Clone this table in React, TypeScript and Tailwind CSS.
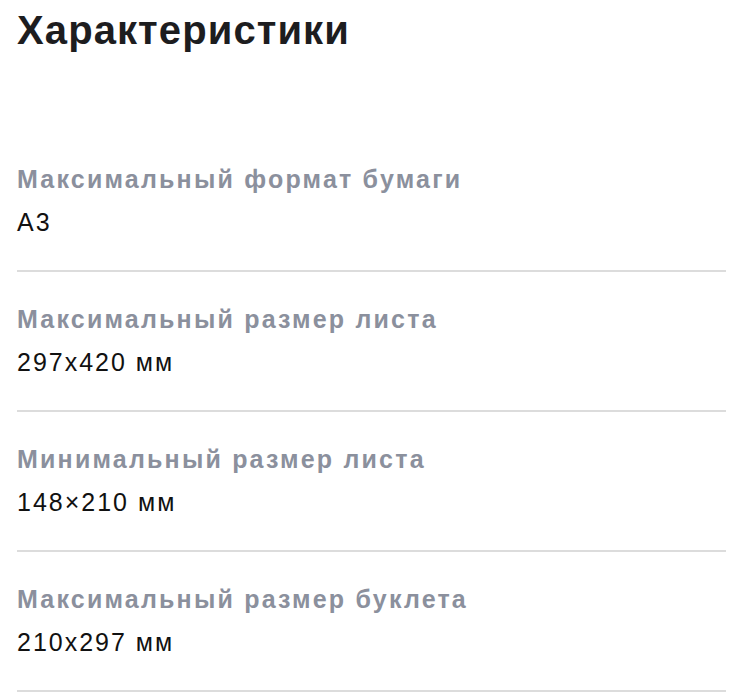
const specs = [
  { label: 'Максимальный формат бумаги', value: 'A3' },
  { label: 'Максимальный размер листа', value: '297x420 мм' },
  { label: 'Минимальный размер листа', value: '148×210 мм' },
  { label: 'Максимальный размер буклета', value: '210x297 мм' },
];

export default function App() {
  return (
    <div className="min-h-[700px] bg-white px-[17px] font-['Liberation_Sans',Arial,sans-serif]">
      <h1 className="pt-[6px] text-[40px] font-bold leading-[48px] tracking-[1.1px] text-[#1d1d1f]">
        Характеристики
      </h1>
      <div className="mt-[78px] w-[709px]">
        {specs.map((spec) => (
          <div key={spec.label} className="border-b-2 border-[#dcdcdc] pt-[31px] pb-[32px]">
            <p className="text-[25px] font-bold leading-8 tracking-[2.2px] text-[#8b909d]">
              {spec.label}
            </p>
            <p className="mt-[11px] text-[25px] leading-8 tracking-[2px] text-[#111111]">
              {spec.value}
            </p>
          </div>
        ))}
      </div>
    </div>
  );
}
